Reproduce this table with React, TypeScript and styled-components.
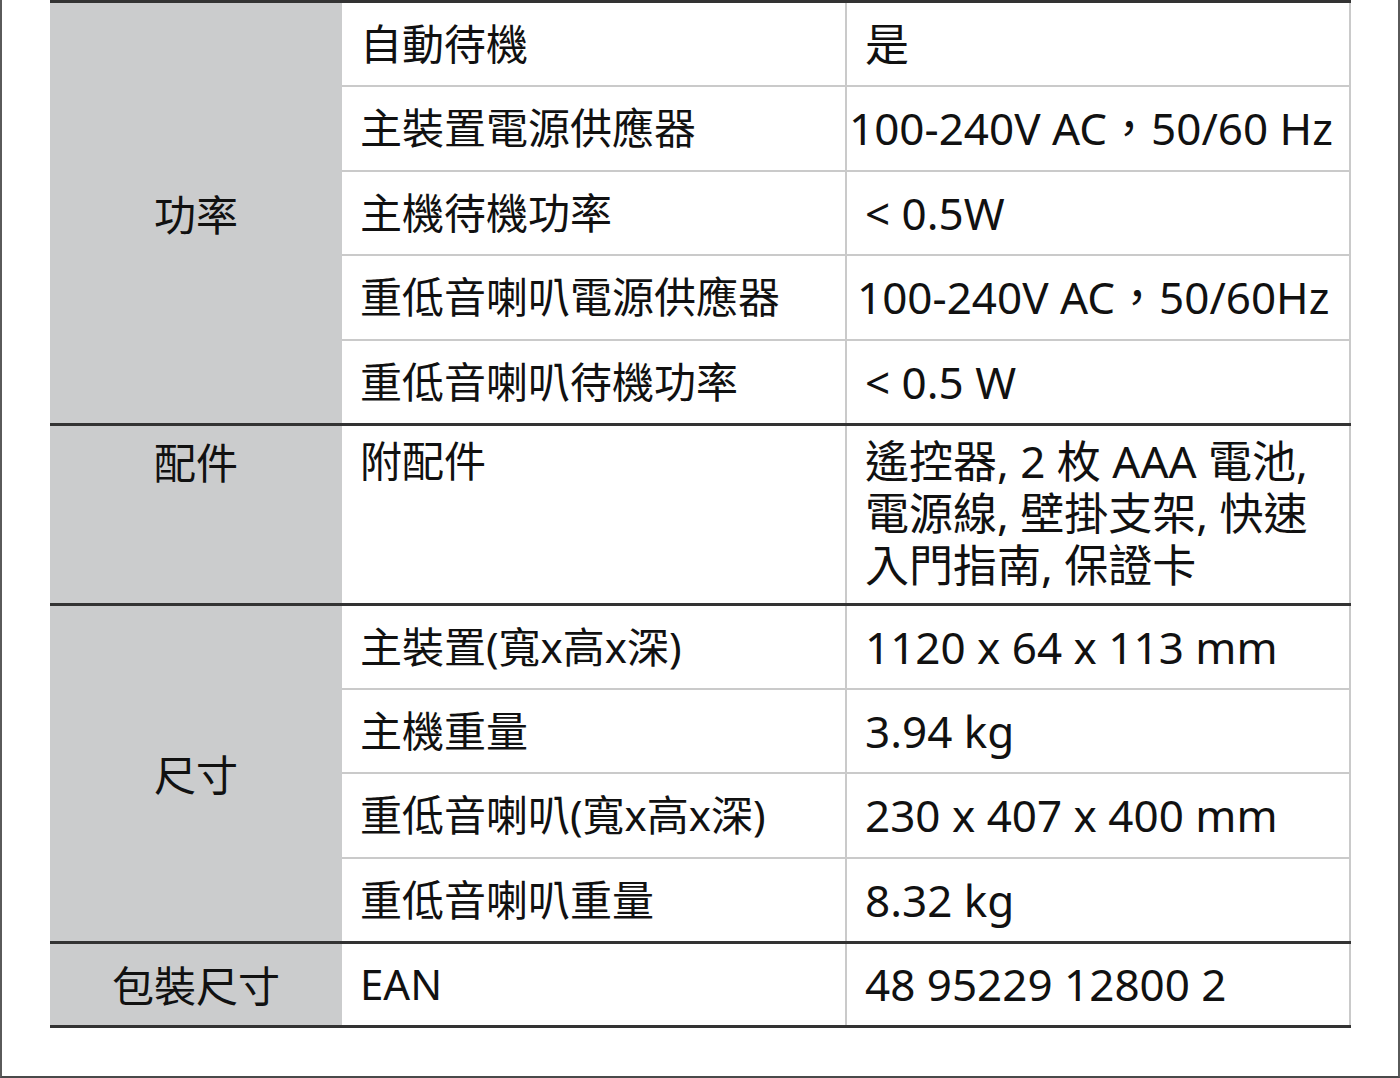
import React from 'react';
import styled, { createGlobalStyle } from 'styled-components';

const GlobalStyle = createGlobalStyle`
  html, body {
    margin: 0;
    padding: 0;
    background: #ffffff;
  }
  body {
    font-family: "Noto Sans", "Noto Sans CJK TC", sans-serif;
    color: #111;
  }
`;

const Frame = styled.div`
  box-sizing: border-box;
  width: 1400px;
  height: 1078px;
  padding-left: 48px;
  border-left: 2px solid #5a5a5a;
  border-right: 2px solid #5a5a5a;
  border-bottom: 2px solid #4a4a4a;
  overflow: hidden;
`;

const Table = styled.table`
  width: 1300px;
  border-collapse: collapse;
  table-layout: fixed;
  line-height: 52px;
`;

const GroupCell = styled.td<{ $top?: boolean }>`
  width: 292px;
  background: #cbcccd;
  text-align: center;
  vertical-align: ${p => (p.$top ? 'top' : 'middle')};
  padding: ${p => (p.$top ? '9px 0 0' : '0')};
  border-top: 3px solid #333;
  border-bottom: 3px solid #333;
  font-family: "Noto Sans CJK TC", sans-serif;
  font-size: 42px;
`;

const Cell = styled.td<{ $pad?: number; $first?: boolean; $last?: boolean; $tall?: boolean; $value?: boolean }>`
  width: 504px;
  height: ${p => (p.$tall ? '180px' : '84.5px')};
  box-sizing: border-box;
  padding: ${p => (p.$tall ? '9px' : '0')} 8px ${p => (p.$tall ? '10px' : '0')} ${p => p.$pad ?? 18}px;
  vertical-align: ${p => (p.$tall ? 'top' : 'middle')};
  white-space: nowrap;
  font-size: ${p => (p.$value ? '44px' : '42px')};
  border-top: ${p => (p.$first ? '3px solid #333' : '2px solid #cacaca')};
  border-bottom: ${p => (p.$last ? '3px solid #333' : 'none')};
  border-right: 2px solid #cacaca;
`;

type Row = { label: string; value: React.ReactNode; pad?: number };
type Group = { title: string; rows: Row[]; top?: boolean; tall?: boolean };

const groups: Group[] = [
  {
    title: '功率',
    rows: [
      { label: '自動待機', value: '是' },
      { label: '主裝置電源供應器', value: '100-240V AC，50/60 Hz', pad: 2 },
      { label: '主機待機功率', value: '< 0.5W' },
      { label: '重低音喇叭電源供應器', value: '100-240V AC，50/60Hz', pad: 10 },
      { label: '重低音喇叭待機功率', value: '< 0.5 W' },
    ],
  },
  {
    title: '配件',
    top: true,
    tall: true,
    rows: [
      {
        label: '附配件',
        value: (
          <>
            遙控器, 2 枚 AAA 電池,
            <br />
            電源線, 壁掛支架, 快速
            <br />
            入門指南, 保證卡
          </>
        ),
      },
    ],
  },
  {
    title: '尺寸',
    rows: [
      { label: '主裝置(寬x高x深)', value: '1120 x 64 x 113 mm' },
      { label: '主機重量', value: '3.94 kg' },
      { label: '重低音喇叭(寬x高x深)', value: '230 x 407 x 400 mm' },
      { label: '重低音喇叭重量', value: '8.32 kg' },
    ],
  },
  {
    title: '包裝尺寸',
    rows: [{ label: 'EAN', value: '48 95229 12800 2' }],
  },
];

export default function App() {
  return (
    <>
      <GlobalStyle />
      <Frame>
        <Table>
          <tbody>
            {groups.map((g, gi) =>
              g.rows.map((r, i) => {
                const last = gi === groups.length - 1 && i === g.rows.length - 1;
                return (
                  <tr key={g.title + r.label}>
                    {i === 0 && (
                      <GroupCell rowSpan={g.rows.length} $top={g.top}>
                        {g.title}
                      </GroupCell>
                    )}
                    <Cell $first={i === 0} $last={last} $tall={g.tall}>
                      {r.label}
                    </Cell>
                    <Cell $first={i === 0} $last={last} $tall={g.tall} $pad={r.pad} $value>
                      {r.value}
                    </Cell>
                  </tr>
                );
              })
            )}
          </tbody>
        </Table>
      </Frame>
    </>
  );
}
